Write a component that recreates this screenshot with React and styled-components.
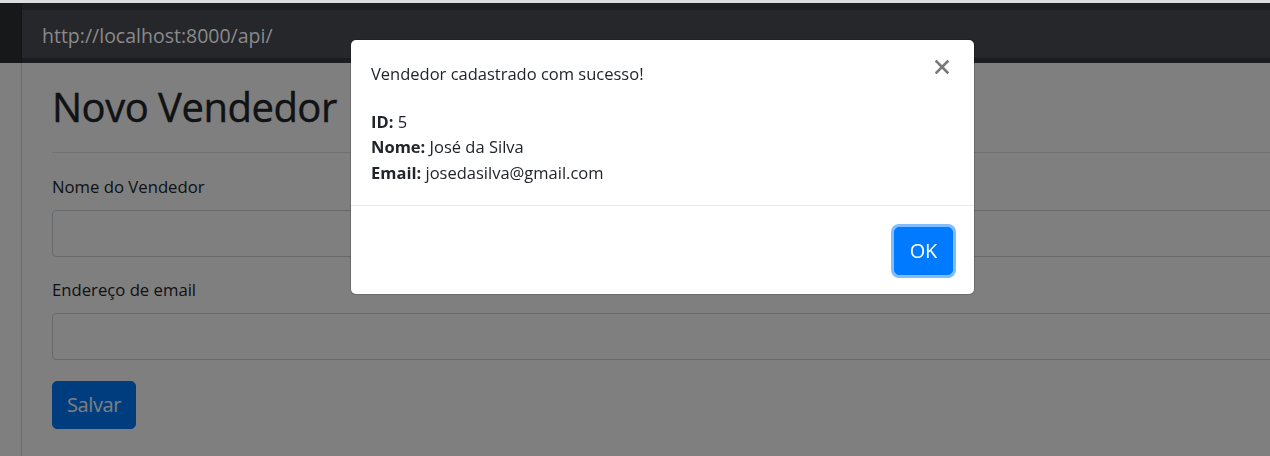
import styled, { createGlobalStyle } from 'styled-components'

const GlobalStyle = createGlobalStyle`
	html, body {
		margin: 0;
		padding: 0;
		overflow: hidden;
		background: #dcdcdc;
	}
	body {
		font-family: "Open Sans", "Noto Sans", sans-serif;
		color: #212529;
	}
	* {
		box-sizing: border-box;
	}
`

const Screen = styled.div`
	padding-top: 3px;
	width: 1270px;
	height: 456px;
	overflow: hidden;
`

const NavBar = styled.header`
	display: flex;
	height: 60px;
	background: #1c1d20;
`

const Rail = styled.div`
	width: 22px;
	background: #17181a;
	border-right: 1px solid #141517;
`

const UrlArea = styled.div`
	flex: 1;
	padding: 7px 0 5px;
`

const UrlBar = styled.div`
	height: 48px;
	background: #26272b;
	display: flex;
	align-items: center;
	padding: 2px 0 0 20px;
	font-size: 19.5px;
	color: #8a8b8d;
`

const Page = styled.main`
	display: flex;
	background: #fff;
	height: 393px;
`

const Gutter = styled.div`
	width: 22px;
	flex-shrink: 0;
	border-right: 1px solid #dcdcdc;
`

const Content = styled.div`
	padding: 20px 0 0 30px;
	width: 1400px;
	flex-shrink: 0;
`

const Title = styled.h1`
	margin: 0;
	font-size: 40px;
	font-weight: 500;
	line-height: 1.2;
	letter-spacing: -0.5px;
	-webkit-text-stroke: 0.4px #212529;
	padding-bottom: 21px;
	border-bottom: 1px solid #e3e3e3;
	margin-bottom: 22px;
`

const Field = styled.div`
	margin-bottom: 21px;
`

const Label = styled.label`
	display: block;
	font-size: 16.7px;
	line-height: 24px;
	margin-bottom: 11px;
`

const Input = styled.input`
	display: block;
	width: 100%;
	height: 47px;
	border: 1px solid #ced4da;
	border-radius: 4px;
	background: #fff;
`

const Button = styled.button`
	font-family: inherit;
	font-size: 20px;
	line-height: 1.5;
	padding: 8px ${p => (p.$focused ? 15 : 14)}px;
	border: 1px solid #007bff;
	border-radius: 5px;
	background: #007bff;
	color: #fff;
	letter-spacing: ${p => (p.$focused ? -0.3 : -0.4)}px;
	box-shadow: ${p => (p.$focused ? '0 0 0 3px #80bdff' : 'none')};
`

const Backdrop = styled.div`
	position: fixed;
	top: 63px;
	left: 0;
	right: 0;
	bottom: 0;
	background: rgba(0, 0, 0, 0.5);
`

const Modal = styled.div`
	position: fixed;
	top: 40px;
	left: 351px;
	width: 623px;
	background: #fff;
	border-radius: 5px;
	box-shadow: 0 0 0 1px rgba(0, 0, 0, 0.15);
	overflow: hidden;
`

const ModalBody = styled.div`
	padding: 21px 20px 20px;
	font-size: 16.5px;
	color: #212529;
	line-height: 25.5px;
`

const MessageRow = styled.div`
	display: flex;
	justify-content: space-between;
	align-items: flex-start;
	margin-bottom: 22px;
`

const Close = styled.button`
	border: 0;
	background: none;
	padding: 0;
	margin: -1px 5px 0 0;
	width: 14px;
	height: 14px;
	display: flex;
	align-items: center;
	justify-content: center;
	cursor: pointer;
`

const Line = styled.div``

const ModalFooter = styled.div`
	display: flex;
	justify-content: flex-end;
	padding: 21px 21px 19px;
	border-top: 1px solid #e9ecef;
`

const details = [
	{ label: 'ID:', value: '5' },
	{ label: 'Nome:', value: 'José da Silva' },
	{ label: 'Email:', value: 'josedasilva@gmail.com' },
]

export default function App() {
	return (
		<>
			<GlobalStyle />
			<Screen>
				<NavBar>
					<Rail />
					<UrlArea>
						<UrlBar>http://localhost:8000/api/</UrlBar>
					</UrlArea>
				</NavBar>
				<Page>
					<Gutter />
					<Content>
						<Title>Novo Vendedor</Title>
						<Field>
							<Label>Nome do Vendedor</Label>
							<Input />
						</Field>
						<Field>
							<Label>Endereço de email</Label>
							<Input />
						</Field>
						<Button>Salvar</Button>
					</Content>
				</Page>
			</Screen>
			<Backdrop />
			<Modal>
				<ModalBody>
					<MessageRow>
						<span>Vendedor cadastrado com sucesso!</span>
						<Close aria-label="Fechar">
							<svg width="14" height="14" viewBox="0 0 14 14">
								<path d="M1.5 1.5 L12.5 12.5 M12.5 1.5 L1.5 12.5" stroke="#7a7a7a" strokeWidth="2.6" strokeLinecap="square" />
							</svg>
						</Close>
					</MessageRow>
					{details.map(d => (
						<Line key={d.label}>
							<b>{d.label}</b> {d.value}
						</Line>
					))}
				</ModalBody>
				<ModalFooter>
					<Button $focused>OK</Button>
				</ModalFooter>
			</Modal>
		</>
	)
}
